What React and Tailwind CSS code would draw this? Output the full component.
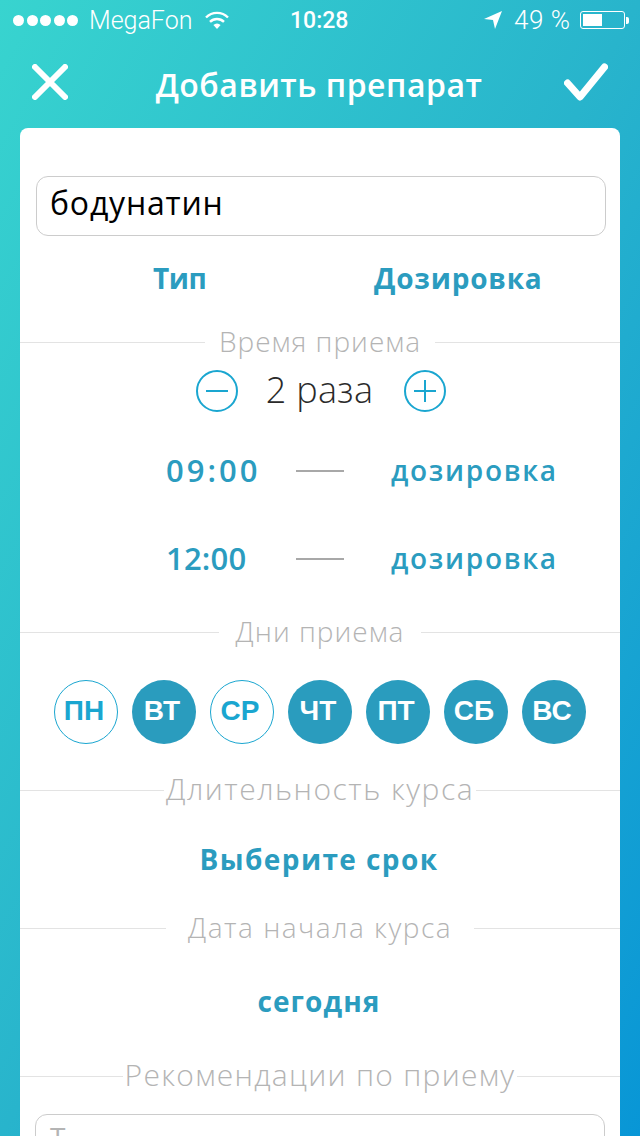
import React from 'react';

const GOTHAM = 'font-["Open_Sans","Noto_Sans",sans-serif]';
const HELV = 'font-["Liberation_Sans",Roboto,sans-serif]';
const STATUS = 'font-[Roboto,"Liberation_Sans",sans-serif]';

const days = [
  { label: 'ПН', active: false },
  { label: 'ВТ', active: true },
  { label: 'СР', active: false },
  { label: 'ЧТ', active: true },
  { label: 'ПТ', active: true },
  { label: 'СБ', active: true },
  { label: 'ВС', active: true },
];

const SectionLabel = ({ children, className, textClass }) => (
  <div className={`flex items-center ${className}`}>
    <div className="h-px flex-1 bg-[#e3e3e3]" />
    <span className={`${GOTHAM} font-light text-[#b4b4b4] leading-none whitespace-nowrap pb-[2px] ${textClass}`}>{children}</span>
    <div className="h-px flex-1 bg-[#e3e3e3]" />
  </div>
);

const Value = ({ children, className }) => (
  <div className={`flex items-center justify-center ${GOTHAM} font-bold text-[#2b9cbf] text-[28px] pb-[2px] pr-[2px] ${className}`}>
    {children}
  </div>
);

const TimeRow = ({ time, textClass }) => (
  <div className="flex items-center h-[88px] pl-[146px]">
    <span className={`${GOTHAM} font-semibold text-[#2b9cbf] text-[31px] leading-none w-[130px] pb-[2px] ${textClass}`}>{time}</span>
    <div className="w-[48px] h-[2px] bg-[#a8a8a8]" />
    <span className={`${GOTHAM} font-semibold text-[#2b9cbf] text-[28px] leading-none tracking-[1.7px] ml-[47px] pb-[2px]`}>дозировка</span>
  </div>
);

const StatusBar = () => (
  <div className={`flex items-center h-[40px] pl-[13px] text-white ${STATUS}`}>
    <div className="flex gap-[2.5px] w-[76px]">
      {[0, 1, 2, 3, 4].map((i) => (
        <div key={i} className="w-[11px] h-[11px] rounded-full bg-white" />
      ))}
    </div>
    <span className="text-[25px] font-light leading-none w-[116px]">MegaFon</span>
    <svg width="24" height="18" viewBox="0 0 24 18" fill="none" stroke="white" strokeWidth="2.4">
      <path d="M1 6.5a15.5 15.5 0 0 1 22 0" />
      <path d="M5 10.8a10 10 0 0 1 14 0" />
      <path d="M12 18l-3.6-4a5 5 0 0 1 7.2 0z" fill="white" stroke="none" />
    </svg>
    <span className="text-[23px] font-medium leading-none ml-[61px] w-[194px]">10:28</span>
    <svg width="18" height="18" viewBox="0 0 18 18" fill="white">
      <path d="M18 0L0 8l9 1 2 9z" />
    </svg>
    <span className="text-[26px] font-light tracking-[0.5px] leading-none ml-[12px] w-[66px]">49 %</span>
    <div className="w-[45px] h-[18px] rounded-[3px] border border-white p-[2px]">
      <div className="w-[19px] h-full bg-white" />
    </div>
    <div className="w-[3px] h-[7px] bg-white rounded-r-[2px] ml-px" />
  </div>
);

const NavBar = () => (
  <div className="flex items-center justify-between h-[84px] pl-[32px] pr-[32px] mb-[4px]">
    <svg width="36" height="36" viewBox="0 0 36 36" fill="none" stroke="white" strokeWidth="6" strokeLinecap="round">
      <path d="M3 3l30 30M33 3L3 33" />
    </svg>
    <span className={`${GOTHAM} font-semibold text-white text-[32px] tracking-[0.5px] leading-none pt-[6px] pl-[6px]`}>Добавить препарат</span>
    <svg width="44" height="38" viewBox="0 0 44 38" fill="none" stroke="white" strokeWidth="7" strokeLinecap="round" strokeLinejoin="round">
      <path d="M3.5 20L16 34L40.5 4" />
    </svg>
  </div>
);

const RoundButton = ({ plus }) => (
  <svg width="42" height="42" viewBox="0 0 42 42" fill="none" stroke="#1aa6d0" strokeWidth="2">
    <circle cx="21" cy="21" r="20" />
    <path d={plus ? 'M10 21h22M21 10v22' : 'M10 21h22'} />
  </svg>
);

export default function App() {
  return (
    <div className="w-[640px] h-[1136px] overflow-hidden bg-linear-to-br from-[#38d4cf] via-[#28b4cc] to-[#0896d6]">
      <StatusBar />
      <NavBar />
      <div className="mx-[20px] h-[1008px] rounded-t-[8px] bg-white pt-[48px] overflow-hidden">
        <div className="ml-[16px] w-[570px] h-[60px] rounded-[12px] border border-[#cccccc] flex items-center px-[13px]">
          <span className={`${GOTHAM} text-black text-[32px] tracking-[0.8px] leading-none pb-[6px]`}>бодунатин</span>
        </div>

        <div className={`flex items-center h-[86px] pb-[2px] ${GOTHAM} font-bold text-[#2b9cbf] text-[28px]`}>
          <span className="ml-[133px] w-[221px] tracking-[-0.5px]">Тип</span>
          <span className="tracking-[0.8px]">Дозировка</span>
        </div>

        <SectionLabel className="h-[40px]" textClass="text-[28px] tracking-[1px] px-[14px]">Время приема</SectionLabel>

        <div className="flex items-center justify-center h-[56px] pt-[2px] pl-[2px]">
          <RoundButton />
          <span className={`${GOTHAM} font-light text-[#2a2a2a] text-[36px] tracking-[0.3px] leading-none w-[166px] text-center pr-[3px] pb-[3px]`}>2 раза</span>
          <RoundButton plus />
        </div>

        <div className="mt-[9px]">
          <TimeRow time="09:00" textClass="tracking-[3px]" />
          <TimeRow time="12:00" textClass="tracking-[0.2px]" />
        </div>

        <SectionLabel className="h-[58px]" textClass="text-[28px] tracking-[1px] px-[17px]">Дни приема</SectionLabel>

        <div className="flex justify-center gap-[14px] mt-[19px]">
          {days.map((day) => (
            <div
              key={day.label}
              className={`w-[64px] h-[64px] rounded-full flex items-center justify-center ${HELV} font-bold text-[28px] leading-none pr-[4px] pb-[2px] ${
                day.active ? 'bg-[#2a9cbe] text-white' : 'border border-[#1aa6d0] text-[#1aa6d0]'
              }`}
            >
              {day.label}
            </div>
          ))}
        </div>

        <SectionLabel className="h-[36px] mt-[28px]" textClass="text-[30px] tracking-[1.5px] px-[2px]">Длительность курса</SectionLabel>
        <Value className="h-[104px] tracking-[1.4px]">Выберите срок</Value>
        <SectionLabel className="h-[32px]" textClass="text-[28px] tracking-[1.5px] px-[22px]">Дата начала курса</SectionLabel>
        <Value className="h-[116px] tracking-[1.1px]">сегодня</Value>
        <SectionLabel className="h-[32px]" textClass="text-[30px] tracking-[1.3px] px-[2px]">Рекомендации по приему</SectionLabel>

        <div className="ml-[15px] mt-[22px] w-[570px] h-[60px] rounded-[12px] border border-[#cccccc] px-[14px] pt-[8px]">
          <span className={`${GOTHAM} text-[#b4b4b4] text-[28px] leading-none`}>Т</span>
        </div>
      </div>
    </div>
  );
}
